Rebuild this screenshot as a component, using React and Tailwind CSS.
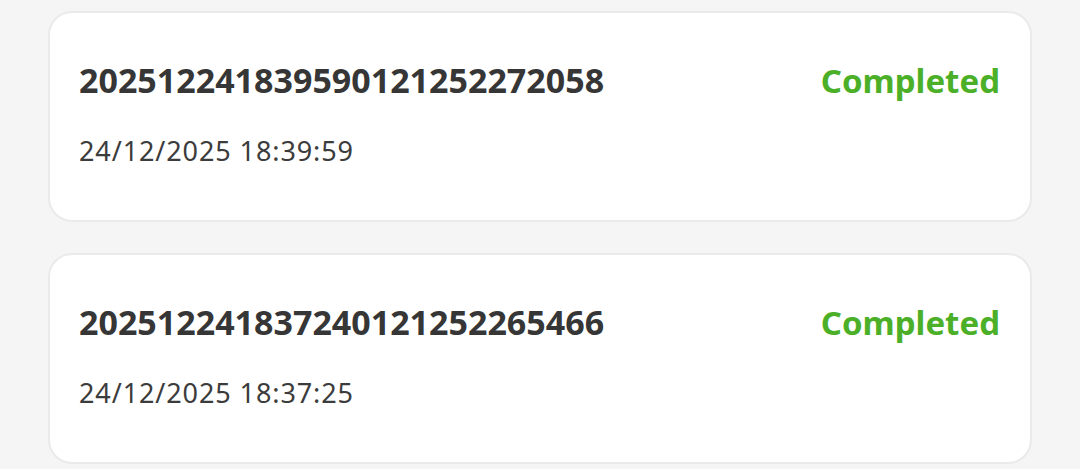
export default function App() {
  const items = [
    { id: "20251224183959012125227 2058".replace(" ", ""), date: "24/12/2025 18:39:59" },
    { id: "20251224183724012125226 5466".replace(" ", ""), date: "24/12/2025 18:37:25" },
  ];
  return (
    <div className="w-[1080px] h-[469px] overflow-hidden bg-[#f5f5f5] px-[48px] pt-[11px] flex flex-col gap-[31px]" style={{ fontFamily: '"Noto Sans", sans-serif' }}>
      {items.map((it, i) => (
        <div key={i} className="h-[211px] shrink-0 bg-white rounded-[24px] border-2 border-[#eaeaea] pl-[29px] pr-[30px] pt-[44px] flex justify-between items-start">
          <div className="flex flex-col">
            <div className="text-[34px] leading-[46px] font-bold text-[#363636]">{it.id}</div>
            <div className="mt-[31px] text-[27px] leading-[34px] tracking-[0.9px] text-[#3c3c3c]">{it.date}</div>
          </div>
          <div className="text-[33px] leading-[46px] font-bold text-[#4caf28] mt-[1px]">Completed</div>
        </div>
      ))}
    </div>
  );
}
